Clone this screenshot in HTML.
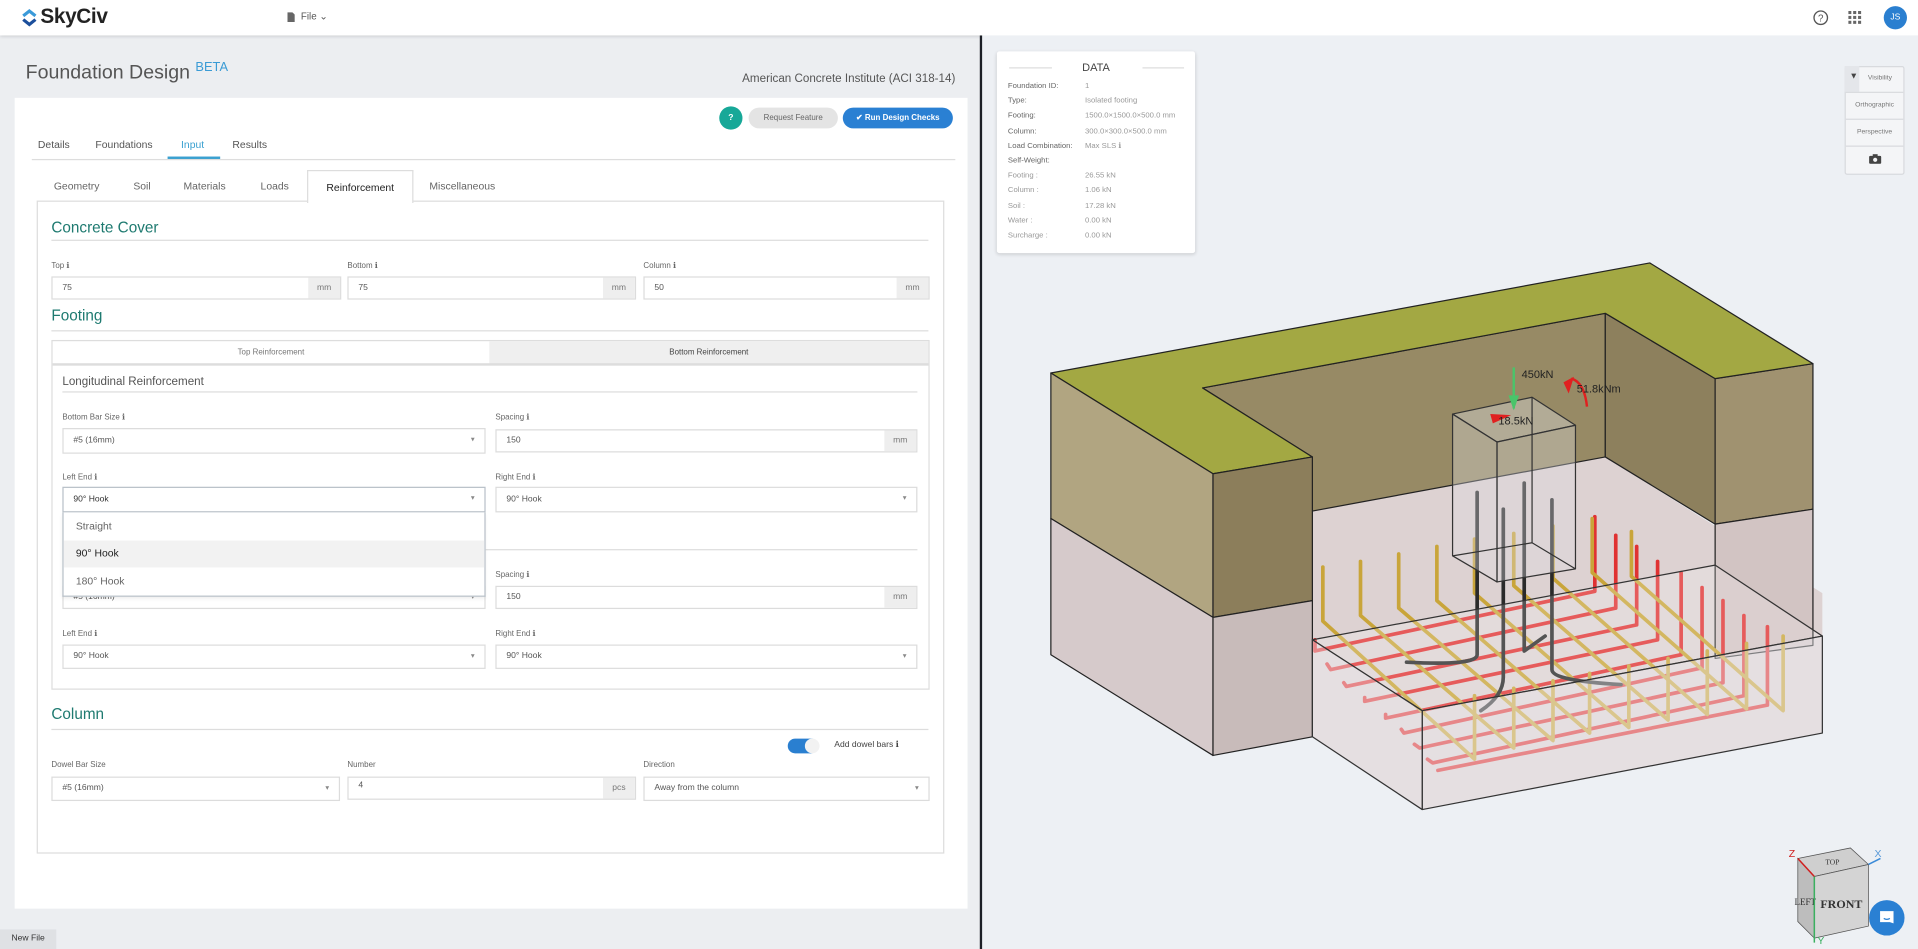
<!DOCTYPE html>
<html><head><meta charset="utf-8"><style>
*{box-sizing:border-box;margin:0;padding:0}
html,body{width:1918px;height:949px;overflow:hidden;background:#eceef1;font-family:"Liberation Sans",sans-serif}
#w{position:absolute;left:0;top:0;width:1568px;height:776px;transform:scale(1.22321,1.22294);transform-origin:0 0;background:#eceef1}
.a{position:absolute;white-space:nowrap}
.lbl{position:absolute;font-size:6.5px;color:#666}
.inp{position:absolute;height:19px;border:1px solid #dcdcdc;background:#fff;font-size:7px;color:#555;padding:5px 8px}
.add{position:absolute;right:0;top:0;bottom:0;width:26px;background:#eee;color:#777;font-size:7px;text-align:center;padding-top:5px}
.car{position:absolute;right:8px;top:5px;font-size:6px;color:#888}
.h{position:absolute;font-size:12.5px;color:#1e7a70}
.ln{position:absolute;height:1px;background:#ddd}
.dr{position:absolute;font-size:6.5px}
</style></head><body><div id="w">
<!-- header -->
<div class="a" style="left:0;top:0;width:1568px;height:29px;background:#fff;box-shadow:0 1px 3px rgba(0,0,0,.18)"></div>
<svg class="a" style="left:17px;top:7px" width="14" height="15" viewBox="0 0 14 15"><path d="M2 6 L7 2 L12 6" stroke="#3a9ad9" stroke-width="2.6" fill="none"/><path d="M2 9 L7 13 L12 9" stroke="#1c4f9c" stroke-width="2.6" fill="none"/></svg>
<div class="a" style="left:33px;top:4px;font-size:17px;font-weight:bold;color:#222;letter-spacing:-0.3px">SkyCiv</div>
<svg class="a" style="left:235px;top:10px" width="6" height="8"><path d="M0 0H4L6 2V8H0Z" fill="#666"/></svg>
<div class="a" style="left:246px;top:9px;font-size:8px;color:#555">File ⌄</div>
<svg class="a" style="left:1482px;top:8px" width="13" height="13"><circle cx="6.5" cy="6.5" r="5.5" stroke="#555" fill="none" stroke-width="1.1"/><text x="6.5" y="9.5" font-size="8" text-anchor="middle" fill="#555" font-family="Liberation Sans">?</text></svg>
<svg class="a" style="left:1511px;top:9px" width="11" height="11"><g fill="#666"><rect x="0" y="0" width="2.5" height="2.5"/><rect x="4" y="0" width="2.5" height="2.5"/><rect x="8" y="0" width="2.5" height="2.5"/><rect x="0" y="4" width="2.5" height="2.5"/><rect x="4" y="4" width="2.5" height="2.5"/><rect x="8" y="4" width="2.5" height="2.5"/><rect x="0" y="8" width="2.5" height="2.5"/><rect x="4" y="8" width="2.5" height="2.5"/><rect x="8" y="8" width="2.5" height="2.5"/></g></svg>
<div class="a" style="left:1540px;top:5px;width:19px;height:19px;border-radius:50%;background:#2a7fd0;color:#fff;font-size:7px;text-align:center;line-height:19px">JS</div>
<!-- divider -->
<div class="a" style="left:801px;top:29px;width:2px;height:747px;background:#1c1f26"></div>
<div class="a" style="left:803px;top:29px;width:765px;height:747px;background:#edf0f4"></div>
<!-- title -->
<div class="a" style="left:21px;top:49px;font-size:16px;color:#555">Foundation Design <sup style="font-size:10.5px;color:#3a9bd5">BETA</sup></div>
<div class="a" style="left:560px;top:59px;width:221px;text-align:right;font-size:9.5px;color:#555">American Concrete Institute (ACI 318-14)</div>
<!-- card -->
<div class="a" style="left:12px;top:80px;width:779px;height:663px;background:#fff"></div>
<div class="a" style="left:588px;top:87px;width:19px;height:19px;border-radius:50%;background:#17a898;color:#fff;font-size:7px;font-weight:bold;text-align:center;line-height:19px">?</div>
<div class="a" style="left:612px;top:88px;width:73px;height:17px;border-radius:9px;background:#e4e4e4;color:#666;font-size:6.5px;text-align:center;line-height:17px">Request Feature</div>
<div class="a" style="left:689px;top:88px;width:90px;height:17px;border-radius:9px;background:#2a80d3;color:#fff;font-size:6.5px;font-weight:bold;text-align:center;line-height:17px">✔ Run Design Checks</div>
<div class="a" style="left:31px;top:113px;font-size:8.5px;color:#555">Details</div>
<div class="a" style="left:78px;top:113px;font-size:8.5px;color:#555">Foundations</div>
<div class="a" style="left:148px;top:113px;font-size:8.5px;color:#3aa0d0">Input</div>
<div class="a" style="left:190px;top:113px;font-size:8.5px;color:#555">Results</div>
<div class="ln" style="left:26px;top:130px;width:755px"></div>
<div class="a" style="left:137px;top:128px;width:43px;height:2px;background:#3aa0d0"></div>
<!-- subtabs -->
<div class="a" style="left:44px;top:147px;font-size:8.5px;color:#666">Geometry</div>
<div class="a" style="left:109px;top:147px;font-size:8.5px;color:#666">Soil</div>
<div class="a" style="left:150px;top:147px;font-size:8.5px;color:#666">Materials</div>
<div class="a" style="left:213px;top:147px;font-size:8.5px;color:#666">Loads</div>
<div class="a" style="left:351px;top:147px;font-size:8.5px;color:#666">Miscellaneous</div>
<div class="a" style="left:30px;top:164px;width:742px;height:534px;border:1px solid #ddd"></div>
<div class="a" style="left:251px;top:139px;width:87px;height:27px;border:1px solid #ddd;border-bottom:none;background:#fff;font-size:8.5px;color:#222;text-align:center;padding-top:8px">Reinforcement</div>
<!-- concrete cover -->
<div class="h" style="left:42px;top:179px">Concrete Cover</div>
<div class="ln" style="left:42px;top:196px;width:717px"></div>
<div class="lbl" style="left:42px;top:213px">Top ℹ</div>
<div class="lbl" style="left:284px;top:213px">Bottom ℹ</div>
<div class="lbl" style="left:526px;top:213px">Column ℹ</div>
<div class="inp" style="left:42px;top:226px;width:237px">75<div class="add">mm</div></div>
<div class="inp" style="left:284px;top:226px;width:236px">75<div class="add">mm</div></div>
<div class="inp" style="left:526px;top:226px;width:234px">50<div class="add">mm</div></div>
<div class="h" style="left:42px;top:251px">Footing</div>
<div class="ln" style="left:42px;top:270px;width:717px"></div>
<!-- reinforcement panel -->
<div class="a" style="left:42px;top:278px;width:718px;height:286px;border:1px solid #ddd"></div>
<div class="a" style="left:400px;top:279px;width:359px;height:19px;background:#efefef;font-size:6.5px;color:#444;text-align:center;line-height:19px">Bottom Reinforcement</div>
<div class="a" style="left:43px;top:279px;width:357px;height:19px;font-size:6.5px;color:#777;text-align:center;line-height:19px">Top Reinforcement</div>
<div class="a" style="left:43px;top:297px;width:716px;height:2px;background:#ddd"></div>
<div class="a" style="left:51px;top:307px;font-size:9.5px;color:#555">Longitudinal Reinforcement</div>
<div class="ln" style="left:51px;top:320px;width:699px"></div>
<div class="lbl" style="left:51px;top:337px">Bottom Bar Size ℹ</div>
<div class="lbl" style="left:405px;top:337px">Spacing ℹ</div>
<div class="inp" style="left:51px;top:350px;width:346px;height:21px;padding-top:6px">#5 (16mm)<span class="car">▾</span></div>
<div class="inp" style="left:405px;top:351px;width:345px">150<div class="add">mm</div></div>
<div class="lbl" style="left:51px;top:386px">Left End ℹ</div>
<div class="lbl" style="left:405px;top:386px">Right End ℹ</div>
<div class="inp" style="left:405px;top:398px;width:345px;height:21px;padding-top:6px">90° Hook<span class="car">▾</span></div>
<div class="ln" style="left:397px;top:449px;width:353px"></div>
<div class="lbl" style="left:405px;top:466px">Spacing ℹ</div>
<div class="inp" style="left:51px;top:479px;width:346px;height:19px">#5 (16mm)<span class="car">▾</span></div>
<div class="inp" style="left:405px;top:479px;width:345px">150<div class="add">mm</div></div>
<div class="lbl" style="left:51px;top:514px">Left End ℹ</div>
<div class="lbl" style="left:405px;top:514px">Right End ℹ</div>
<div class="inp" style="left:51px;top:527px;width:346px;height:20px">90° Hook<span class="car">▾</span></div>
<div class="inp" style="left:405px;top:527px;width:345px;height:20px">90° Hook<span class="car">▾</span></div>
<!-- open dropdown -->
<div class="inp" style="left:51px;top:398px;width:346px;height:21px;border-color:#b8c0c8;padding-top:6px;color:#333">90° Hook<span class="car">▾</span></div>
<div class="a" style="left:51px;top:419px;width:346px;height:69px;background:#fff;border:1px solid #b8c0c8;border-top:none;box-shadow:0 2px 3px rgba(0,0,0,.08)"></div>
<div class="dr" style="left:62px;top:425px;font-size:8.5px;color:#666">Straight</div>
<div class="a" style="left:52px;top:442px;width:344px;height:22px;background:#f2f2f2"></div>
<div class="dr" style="left:62px;top:447px;font-size:8.5px;color:#222">90° Hook</div>
<div class="dr" style="left:62px;top:470px;font-size:8.5px;color:#666">180° Hook</div>
<!-- column -->
<div class="h" style="left:42px;top:577px">Column</div>
<div class="ln" style="left:42px;top:596px;width:717px"></div>
<div class="a" style="left:644px;top:604px;width:25px;height:12px;border-radius:6px;background:#2a7fd0"></div>
<div class="a" style="left:658px;top:604px;width:12px;height:12px;border-radius:50%;background:#f2f2f2"></div>
<div class="a" style="left:682px;top:605px;font-size:7px;color:#444">Add dowel bars ℹ</div>
<div class="lbl" style="left:42px;top:622px">Dowel Bar Size</div>
<div class="lbl" style="left:284px;top:622px">Number</div>
<div class="lbl" style="left:526px;top:622px">Direction</div>
<div class="inp" style="left:42px;top:635px;width:236px;height:20px">#5 (16mm)<span class="car">▾</span></div>
<div class="inp" style="left:284px;top:635px;width:236px;padding-top:3px">4<div class="add">pcs</div></div>
<div class="inp" style="left:526px;top:635px;width:234px;height:20px">Away from the column<span class="car">▾</span></div>
<div class="a" style="left:0;top:760px;width:46px;height:16px;background:#dfe1e4;font-size:7px;color:#333;text-align:center;line-height:16px">New File</div>

<!-- 3D scene -->
<svg class="a" style="left:0;top:0" width="1568" height="776" viewBox="0 0 1568 776">
<g transform="translate(842,202.8) scale(0.4276,0.3051)" stroke-linejoin="round">
<g stroke="#222" stroke-width="1" vector-effect="non-scaling-stroke">
<polygon points="540,705 1100,560 1310,745 1515,925 1515,1300 750,1505 540,1310" fill="#ddd2d2" vector-effect="non-scaling-stroke" stroke="none"/>
<polygon points="330,375 1100,175 1100,560 540,705 540,560" fill="#978a65" vector-effect="non-scaling-stroke"/>
<polygon points="1100,175 1310,350 1310,740 1100,560" fill="#8d805d" vector-effect="non-scaling-stroke"/>
<polygon points="1310,350 1497,310 1497,700 1310,740" fill="#a09270" vector-effect="non-scaling-stroke"/>
<polygon points="1310,740 1497,700 1497,1065 1310,1100" fill="#d2c4c3" vector-effect="non-scaling-stroke"/>
<polygon points="40,335 1185,40 1497,310 1310,350 1100,175 330,375 540,560 350,605" fill="#a3a843" vector-effect="non-scaling-stroke"/>
<polygon points="40,335 350,605 350,990 40,725" fill="#b1a581" vector-effect="non-scaling-stroke"/>
<polygon points="350,605 540,560 540,945 350,990" fill="#8c7e5b" vector-effect="non-scaling-stroke"/>
<polygon points="40,725 350,990 350,1360 40,1090" fill="#d6cacb" vector-effect="non-scaling-stroke"/>
<polygon points="350,990 540,945 540,1310 350,1360" fill="#c8bbba" vector-effect="non-scaling-stroke"/>
</g>
<!-- rebars -->
<g fill="none" stroke-width="3" vector-effect="non-scaling-stroke" stroke-linecap="round">
<g stroke="#e03232">
<path d="M545 1050 L545 1080 L1080 920 L1080 720" vector-effect="non-scaling-stroke"/>
<path d="M568 1115 L575 1130 L1120 965 L1120 770" vector-effect="non-scaling-stroke"/>
<path d="M600 1165 L605 1175 L1160 1010 L1160 800" vector-effect="non-scaling-stroke"/>
<path d="M640 1205 L640 1215 L1200 1050 L1200 840" vector-effect="non-scaling-stroke"/>
<path d="M680 1250 L680 1260 L1245 1090 L1245 870" vector-effect="non-scaling-stroke"/>
<path d="M710 1290 L715 1300 L1285 1125 L1285 910" vector-effect="non-scaling-stroke"/>
<path d="M735 1330 L745 1340 L1325 1165 L1325 945" vector-effect="non-scaling-stroke"/>
<path d="M760 1370 L770 1380 L1365 1200 L1365 985" vector-effect="non-scaling-stroke"/>
<path d="M780 1400 L1410 1225 L1410 1015" vector-effect="non-scaling-stroke"/>
</g>
<g stroke="#c9a53a">
<path d="M560 855 L560 1000 L850 1370 L850 1200" vector-effect="non-scaling-stroke"/>
<path d="M632 840 L632 985 L925 1340 L925 1180" vector-effect="non-scaling-stroke"/>
<path d="M705 820 L705 965 L1000 1320 L1000 1160" vector-effect="non-scaling-stroke"/>
<path d="M778 800 L778 945 L1070 1300 L1070 1140" vector-effect="non-scaling-stroke"/>
<path d="M850 780 L850 925 L1145 1285 L1145 1120" vector-effect="non-scaling-stroke"/>
<path d="M925 765 L925 905 L1220 1265 L1220 1100" vector-effect="non-scaling-stroke"/>
<path d="M1000 745 L1000 885 L1295 1250 L1295 1080" vector-effect="non-scaling-stroke"/>
<path d="M1075 725 L1075 870 L1370 1235 L1370 1060" vector-effect="non-scaling-stroke"/>
<path d="M1150 760 L1150 880 L1440 1240 L1440 1040" vector-effect="non-scaling-stroke"/>
</g>
<g stroke="#2a2a2a">
<path d="M855 655 L855 1090 Q855 1120 720 1110" vector-effect="non-scaling-stroke"/>
<path d="M905 700 L905 1150 Q905 1200 862 1240" vector-effect="non-scaling-stroke"/>
<path d="M945 630 L945 1080 L985 1040" vector-effect="non-scaling-stroke"/>
<path d="M998 675 L998 1130 Q998 1160 1130 1170" vector-effect="non-scaling-stroke"/>
</g>
</g>
<!-- footing box -->
<g stroke="#333" stroke-width="1" fill="none">
<polygon points="540,1050 750,1240 1515,1040 1310,850" fill="rgba(255,255,255,0.2)" vector-effect="non-scaling-stroke"/>
<polygon points="750,1240 1515,1040 1515,1300 750,1505" fill="rgba(240,240,244,0.45)" vector-effect="non-scaling-stroke"/>
<polygon points="540,1050 750,1240 750,1505 540,1310" fill="rgba(240,240,244,0.45)" vector-effect="non-scaling-stroke"/>
<!-- column -->
<polygon points="808,445 960,400 1043,475 893,520" fill="rgba(220,220,225,0.4)" vector-effect="non-scaling-stroke"/>
<polygon points="808,445 893,520 893,895 808,825" fill="rgba(220,220,225,0.35)" vector-effect="non-scaling-stroke"/>
<polygon points="893,520 1043,475 1043,860 893,895" fill="rgba(220,220,225,0.35)" vector-effect="non-scaling-stroke"/>
<path d="M960 400 L960 790 L808 825 M960 790 L1043 860" vector-effect="non-scaling-stroke"/>
</g>
<path d="M925 320 L925 430" stroke="#4ac46a" stroke-width="2" vector-effect="non-scaling-stroke"/>
<path d="M915 395 L925 435 L935 395Z" fill="#4ac46a"/>
<path d="M880 445 L920 448 L885 470Z" fill="#e02020"/>
<path d="M1065 425 Q1060 360 1035 350" stroke="#e02020" stroke-width="2" fill="none" vector-effect="non-scaling-stroke"/>
<path d="M1020 360 L1040 345 L1030 390Z" fill="#e02020"/>
</g>
<text x="1244" y="309" font-size="9" fill="#222" font-family="Liberation Sans">450kN</text>
<text x="1289" y="321" font-size="9" fill="#222" font-family="Liberation Sans">51.8kNm</text>
<text x="1225" y="347" font-size="9" fill="#222" font-family="Liberation Sans">18.5kN</text>
</svg>

<!-- DATA card -->
<div class="a" style="left:815px;top:42px;width:162px;height:165px;background:#fff;box-shadow:0 1px 3px rgba(0,0,0,.15);border-radius:2px"></div>
<div class="a" style="left:825px;top:55px;width:35px;height:1px;background:#ddd"></div>
<div class="a" style="left:934px;top:55px;width:34px;height:1px;background:#ddd"></div>
<div class="a" style="left:870px;top:50px;width:52px;text-align:center;font-size:9px;color:#444">DATA</div>
<div class="a" style="left:824px;top:65px;font-size:6.3px;line-height:12.2px;color:#666">Foundation ID:<br>Type:<br>Footing:<br>Column:<br>Load Combination:<br>Self-Weight:<br><span style="color:#999">Footing :<br>Column :<br>Soil :<br>Water :<br>Surcharge :</span></div>
<div class="a" style="left:887px;top:65px;font-size:6.3px;line-height:12.2px;color:#999">1<br>Isolated footing<br>1500.0×1500.0×500.0 mm<br>300.0×300.0×500.0 mm<br>Max SLS ℹ<br>&nbsp;<br>26.55 kN<br>1.06 kN<br>17.28 kN<br>0.00 kN<br>0.00 kN</div>
<!-- right toolbar -->
<div class="a" style="left:1508px;top:54px;width:49px;height:89px;background:#f4f5f7;border:1px solid #d8dade;border-radius:2px"></div>
<div class="a" style="left:1508px;top:54px;width:12px;height:21px;background:#e4e6ea"></div>
<div class="a" style="left:1512px;top:59px;font-size:7px;color:#444">▼</div>
<div class="a" style="left:1527px;top:61px;font-size:5.5px;color:#777">Visibility</div>
<div class="a" style="left:1509px;top:75px;width:47px;height:1px;background:#d8dade"></div>
<div class="a" style="left:1508px;top:83px;width:49px;text-align:center;font-size:5.5px;color:#777">Orthographic</div>
<div class="a" style="left:1509px;top:97px;width:47px;height:1px;background:#d8dade"></div>
<div class="a" style="left:1508px;top:105px;width:49px;text-align:center;font-size:5.5px;color:#777">Perspective</div>
<div class="a" style="left:1509px;top:119px;width:47px;height:1px;background:#d8dade"></div>
<svg class="a" style="left:1528px;top:126px" width="10" height="8"><rect x="0" y="1.5" width="10" height="6.5" rx="1" fill="#444"/><rect x="3" y="0" width="4" height="2" fill="#444"/><circle cx="5" cy="4.7" r="1.7" fill="#f4f5f7"/></svg>
<!-- cube -->
<svg class="a" style="left:1456px;top:686px" width="84" height="86" viewBox="0 0 68 70">
<polygon points="11,13 46,6 58,17 22,25" fill="#cfcfcf" stroke="#555" stroke-width=".5"/>
<polygon points="11,13 22,25 22,66 11,55" fill="#bdbdbd" stroke="#555" stroke-width=".5"/>
<polygon points="22,25 58,17 58,58 22,66" fill="#d4d4d4" stroke="#555" stroke-width=".5"/>
<text x="40" y="46" font-size="8" font-weight="bold" text-anchor="middle" fill="#333" font-family="Liberation Serif">FRONT</text>
<text x="16" y="44" font-size="6" text-anchor="middle" fill="#333" font-family="Liberation Serif">LEFT</text>
<text x="34" y="17" font-size="5" text-anchor="middle" fill="#333" font-family="Liberation Serif">TOP</text>
<path d="M11 13 L22 25" stroke="#d02020" stroke-width="1"/>
<path d="M22 25 L22 69" stroke="#3bb060" stroke-width="1"/>
<path d="M58 17 L66 13" stroke="#3a8ad8" stroke-width="1"/>
<text x="5" y="12" font-size="7" fill="#d02020" font-family="Liberation Sans">Z</text>
<text x="62" y="12" font-size="7" fill="#5a9ad8" font-family="Liberation Sans">X</text>
<text x="24" y="70" font-size="7" fill="#3bb060" font-family="Liberation Sans">Y</text>
</svg>
<div class="a" style="left:1528px;top:736px;width:29px;height:29px;border-radius:50%;background:#2a80d3"></div>
<svg class="a" style="left:1535px;top:743px" width="15" height="15"><path d="M2 2H13V12L10 11H2Z" fill="#fff"/><path d="M5 8Q7.5 9.5 10 8" stroke="#2a80d3" fill="none" stroke-width="1"/></svg>
</div></body></html>
